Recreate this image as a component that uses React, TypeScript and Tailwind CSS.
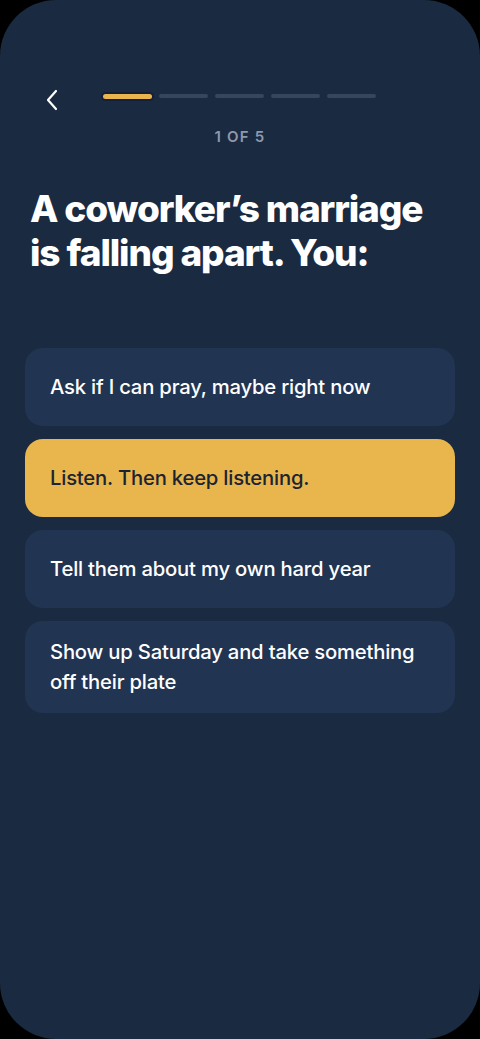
import React, {useState} from 'react';

const options = [
    'Ask if I can pray, maybe right now',
    'Listen. Then keep listening.',
    'Tell them about my own hard year',
    'Show up Saturday and take something off their plate',
];

export default function App() {
    const [selected, setSelected] = useState<number>(1);
    const step = 1;
    const total = 5;

    return (
        <div className="bg-black w-[480px] h-[1039px]">
            <div className="w-full h-full rounded-[56px] bg-[#1a2a41] overflow-hidden font-['Inter',sans-serif]">

                <div className="flex items-start pt-[88px] pl-[42px] pr-[104px]">
                    <button className="w-[20px] h-[24px] flex items-center justify-center text-white">
                        <svg width="16" height="24" viewBox="0 0 16 24" fill="none">
                            <path d="M12 3 L4 12 L12 21" stroke="currentColor" strokeWidth="2.2" strokeLinecap="round" strokeLinejoin="round"/>
                        </svg>
                    </button>
                    <div className="flex flex-1 gap-[7px] ml-[41px] mt-[6px]">
                        {Array.from({length: total}).map((_, i) => (
                            <div
                                key={i}
                                className={i < step
                                    ? "flex-1 h-[5px] rounded-full bg-[#e8b64c] ring-2 ring-[#13203a]"
                                    : "flex-1 h-[4px] rounded-full bg-[#36465d]"}
                            />
                        ))}
                    </div>
                </div>

                <p className="mt-[14px] text-center text-[15px] font-semibold tracking-[0.08em] text-[#8d99ab]">
                    {step} OF {total}
                </p>

                <h1 className="mt-[38px] ml-[30px] w-[412px] text-[37px] leading-[44px] font-extrabold tracking-[-0.03em] text-white">
                    A coworker’s marriage is falling apart. You:
                </h1>

                <div className="mt-[73px] px-[25px] flex flex-col gap-[13px]">
                    {options.map((opt, i) => (
                        <button
                            key={i}
                            onClick={() => setSelected(i)}
                            className={selected === i
                                ? "min-h-[78px] rounded-[18px] bg-[#e8b64c] px-[25px] py-[16px] text-left flex items-center text-[20.25px] leading-[30px] font-medium tracking-[-0.01em] text-[#1c2333]"
                                : "min-h-[78px] rounded-[18px] bg-[#213452] px-[25px] py-[16px] text-left flex items-center text-[20.25px] leading-[30px] font-medium tracking-[-0.01em] text-white"}
                        >
                            {opt}
                        </button>
                    ))}
                </div>

            </div>
        </div>
    );
}
